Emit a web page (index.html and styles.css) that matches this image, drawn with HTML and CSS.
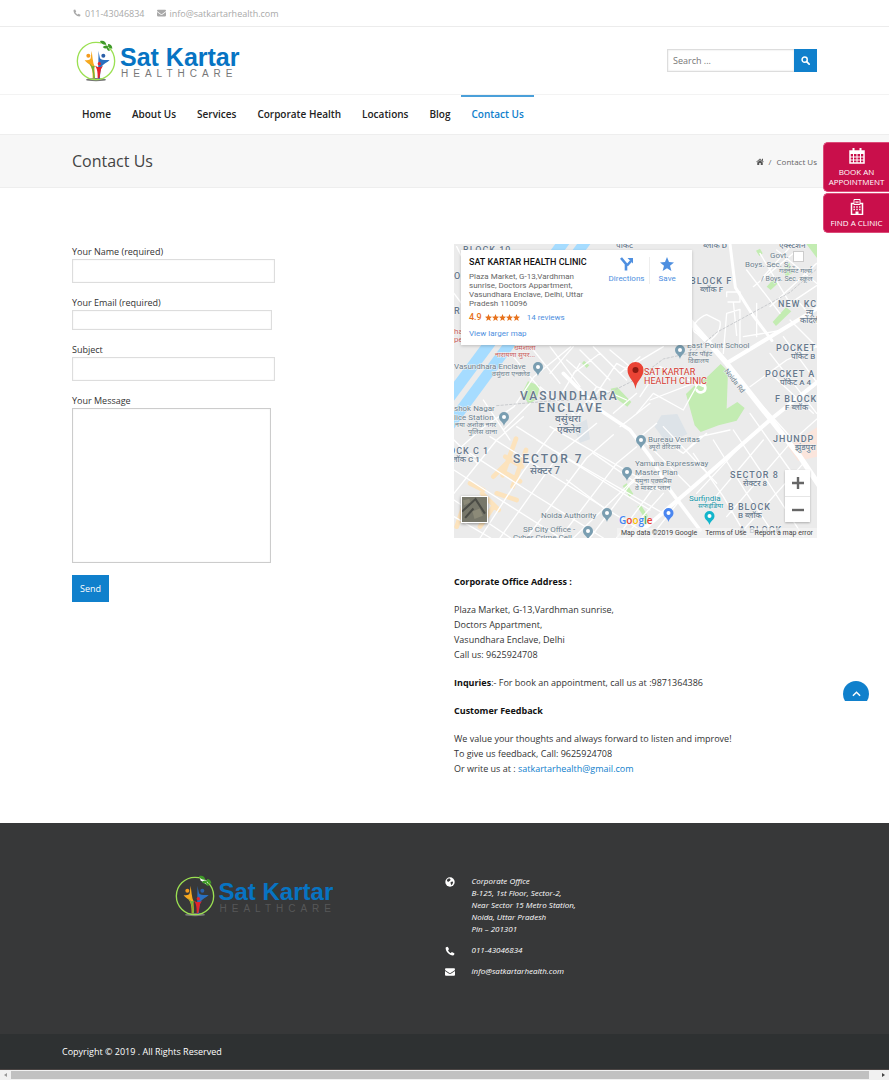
FILE: index.html
```html
<!DOCTYPE html>
<html lang="en">
<head>
<meta charset="utf-8">
<title>Contact Us - Sat Kartar Healthcare</title>
<meta name="viewport" content="width=device-width, initial-scale=1">
<link rel="stylesheet" href="styles.css">
</head>
<body>
<svg class="sprite" aria-hidden="true">
  <symbol id="i-phone" viewBox="0 0 16 16"><path d="M1 3.200C1 2 2.200 1.200 3.800 1c.5 0 .7.300 1 .9l1.400 2.500c.3.6 0 1-.5 1.400-.8.600-1 .8-.7 1.400 1 1.800 2 2.800 3.800 3.800.6.300.8.100 1.400-.7.400-.5.800-.8 1.400-.5l2.500 1.400c.6.300.9.5.9 1-.2 1.600-1 2.800-2.200 2.800C7 15 1 9 1 3.200z" fill="currentColor"/></symbol>
  <symbol id="i-mail" viewBox="0 0 16 14"><path d="M1.500 1h13c1 0 1.500.6 1.500 1.400 0 1-.8 1.900-1.600 2.500L9.500 8.300c-1 .7-2 .7-3 0L1.600 4.900C.8 4.300 0 3.400 0 2.400 0 1.600.5 1 1.500 1zM0 5.300l6 4.200c1.300.9 2.700.9 4 0l6-4.200v6.200c0 .9-.6 1.500-1.500 1.500h-13C.6 13 0 12.400 0 11.500z" fill="currentColor"/></symbol>
  <symbol id="i-emblem" viewBox="0 0 120 126">
    <ellipse class="shade" cx="60" cy="119" rx="30" ry="5"/>
    <circle cx="60" cy="63" r="56" fill="none" stroke="#9be052" stroke-width="4"/>
    <path d="M76 5l24 16-4 9-20-14z" class="gap"/>
    <path d="M72 3c10-3 17 1 19 11-9 1-16-2-19-11zM80 21c6-6 13-6 18 0-5 6-12 6-18 0zM96 12c8 0 13 5 13 14-8 0-14-5-13-14zM93 23c6 0 9 4 8 10-6-1-9-4-8-10z" fill="#3f9a28"/>
    <circle cx="37" cy="47" r="6" fill="#f39a1e"/>
    <path d="M26 60c8 2 15 1 18-5l3-23 3 25c2 8 1 12 5 20l2 38h-7c0-20-2-33-10-42-5-3-10-7-14-13z" fill="#f7a81f"/>
    <circle cx="82" cy="47" r="6" fill="#2a5fa8"/>
    <path d="M67 32l5 23c5 6 14 5 29 5-7 8-18 11-23 18-5 10-6 24-6 38h-5c0-20-1-32 0-46 0-14 1-26 0-38z" fill="#2a6fc0"/>
    <circle cx="70" cy="71" r="5" fill="#e3242b"/>
    <path d="M57 77l8 4h10l6-4-6 11c-2 10-3 17-5 27h-5c0-15 0-27-8-38z" fill="#e3242b"/>
    <path d="M40 70l9 9 8-2-4 9 4 29h-5c0-18-3-30-12-45z" fill="#69b33c"/>
  </symbol>
  <symbol id="i-poi" viewBox="0 0 10 14"><path d="M5 0a5 5 0 0 1 5 5c0 4-4 4.500-5 9-1-4.500-5-5-5-9a5 5 0 0 1 5-5z" fill="currentColor"/><circle cx="5" cy="5" r="2" fill="#fff"/></symbol>
  <symbol id="i-star" viewBox="0 0 7 7"><path d="M3.500 0l1 2.500 2.500.2-2 1.700.7 2.600-2.200-1.400L1.300 7 2 4.400 0 2.700l2.500-.2z" fill="currentColor"/></symbol>
</svg>

<header>
  <div class="topbar">
    <span><svg class="ic"><use href="#i-phone"/></svg>011-43046834</span>
    <span><svg class="ic wide"><use href="#i-mail"/></svg>info@satkartarhealth.com</span>
  </div>
  <div class="masthead">
    <a class="logo" href="#"><svg class="emblem"><use href="#i-emblem"/></svg><span class="words"><b>Sat Kartar</b><i>HEALTHCARE</i></span></a>
    <form class="search"><input type="search" aria-label="Search" placeholder="Search ..."><button type="button" aria-label="Search"><svg viewBox="0 0 16 16"><circle cx="6.500" cy="6.500" r="4.600" fill="none" stroke="#fff" stroke-width="2.600"/><path d="M10 10l4.500 4.500" stroke="#fff" stroke-width="3" stroke-linecap="round"/></svg></button></form>
  </div>
  <nav class="menu">
    <a href="#">Home</a><a href="#">About Us</a><a href="#">Services</a><a href="#">Corporate Health</a><a href="#">Locations</a><a href="#">Blog</a><a class="active" href="#">Contact Us</a>
  </nav>
</header>

<div class="titlebar">
  <h1>Contact Us</h1>
  <div class="crumbs"><a href="#" aria-label="Home"><svg viewBox="0 0 16 14"><path d="M8 1l7.500 6.500-1 1L8 3 1.500 8.500l-1-1zM12 1.500h2V6l-2-2zM8 4.200l5.500 4.600V14H9.500v-4h-3v4H2.500V8.800z" fill="#555"/></svg></a><span>/</span><span>Contact Us</span></div>
</div>

<main class="content">
  <form class="contact">
    <label for="name">Your Name (required)</label><input id="name" type="text">
    <label for="email">Your Email (required)</label><input id="email" class="email" type="email">
    <label for="subject">Subject</label><input id="subject" type="text">
    <label for="message">Your Message</label><textarea id="message"></textarea>
    <button type="button">Send</button>
  </form>

  <section class="info">
    <div class="map">
      <svg class="canvas" viewBox="0 0 363 294" preserveAspectRatio="xMidYMid slice">
        <rect width="363" height="294" fill="#ebebeb"/>
        <g transform="scale(.33333) translate(-12 -12)" fill="none" stroke-linecap="round" stroke-linejoin="round">
          <g stroke="#a6dcff">
            <path d="M0 470L200 200 360 -20" stroke-width="34"/>
            <path d="M0 555L140 365 250 215 410 0" stroke-width="32"/>
          </g>
          <g fill="#c3ecb2">
            <path d="M708 462l28-28 32-20 44-42 22 22-4 112 32-20 22 18-24 38-54 14-54 20-18-20z"/>
            <path d="M216 460l18-36 36 14-10 40-24 14zM482 446l20-4 42 44-12 14-40-30zM968 246l40-44 16 12-46 44zM1060 0h50v66zM950 140l18-20 16 10-22 20zM402 362l16 14-8 8-14-14zM518 738l12-8 20 32-12 8zM562 800l10-6 22 34-8 10zM918 32l12-6 8 14-10 8zM1000 90l18-22 10 30-20 12z"/>
          </g>
          <path d="M614 560l20-34 48-4 30 60-60 30zM370 560l40-22 10 60-30 10z" fill="#dde3e8"/>
          <path d="M1014 620l90-60v90l-60 12z" fill="#fbe5dc"/>
          <g stroke="#fce3bd" stroke-width="14">
            <path d="M198 596l-40 110M228 630l-40 110M150 690l60 34M166 650l50 30M96 760l50 50M140 760l60 20M60 730l40 20M130 800l-40 60M40 800l-20 60M180 660l-50 50"/>
          </g>
          <g stroke="#fff" stroke-width="4">
            <path d="M12 640l90-80 90-60 60-90 110-90M12 760L140 600l80-70M90 894l130-200 90-120 60-50M150 894L330 640l110-90M230 894l180-240 80-70M330 894L500 670l60-50M420 894l120-160 50-40M500 894l110-150"/>
            <path d="M12 690l140 90 180 114M60 640l170 110 230 144M120 590l160 100 330 204M200 560l110 70 330 190M12 830l110 64M12 780l170 114M300 560l330 190M260 600l340 210"/>
            <path d="M270 440l110 90 60-90 90 40M300 400l70-80M370 400l80-60 60 60 60-50M390 330l90 90M430 320l100 100M350 360l90 80M480 330l60 50 100-60M330 470l60-100M440 460l60-90 70 40M560 520l50-60 90 50 50-90"/>
            <path d="M20 20l30 60M12 160l30 40M190 350l100 120M250 330l80 100M300 320l90 120M12 600l70 70M100 480l80 120M240 490l-80 80"/>
            <path d="M570 470l60-90 130 60M600 480l130-50M490 520l70-60M510 560l90-70M560 600l60-50M640 600l60 40 70-60M700 640l50-50 90-20"/>
            <path d="M740 280c-30-14 10-50 30-56l40 20c6 30-20 50-40 66zM830 170v-14h40v30h-36M850 186l10 100M880 290l120-20M820 340l10-120 40-12M870 320V210M920 290V190"/>
            <path d="M740 760L870 620M780 790l160-190M830 830l190-220M880 870l180-200M730 640l90 130 70 120M790 600l100 160 80 120M850 570l100 150 110 170M900 520l120 170M930 490l100 110 90-80M960 540l130-100M900 440l110-80 90-40M960 340l140 180M1000 290l110 150M950 390l140 130"/>
            <path d="M930 40l90 150 90-60M890 90l100 130M980 30l120 100M910 140l120-100M960 200l140-130M1020 240l90 90M1050 190l60 70M1030 10l-90 100"/>
            <path d="M350 720l120 90M430 640l160 110M590 610l130 130M640 560l160 170M560 710l-190 184M640 760L520 894M690 780l-90 114"/>
          </g>
          <g stroke="#fff">
            <path d="M700 220L830 370 940 510 1050 650 1110 740" stroke-width="16"/>
            <path d="M830 370L1110 200M550 894L730 740 960 540 1110 420" stroke-width="12"/>
            <path d="M340 400l110 110 90 60 60 80 60 100 90 120" stroke-width="11"/>
            <path d="M840 12l16 130 50 80 60 80" stroke-width="9"/>
            <path d="M738 436c10-8 28-6 28 8s-20 18-26 6" stroke-width="8"/>
          </g>
          <path d="M140 497l160-14 140-6 120-60 80-60 90-20 70-60 220-120 80-70" stroke="#c9cbce" stroke-width="3" stroke-dasharray="7 6"/>
        </g>
        <g class="area">
          <text x="9" y="9">BLOCK 10</text><text x="236" y="40">BLOCK F</text><text class="s" x="246" y="48">ब्लॉक F</text>
          <text x="324" y="63">NEW KC</text><text class="s" x="352" y="71">न्यू</text><text class="s" x="346" y="79">कोंदली</text>
          <text x="322" y="107">POCKET</text><text class="s" x="337" y="115">पॉकेट B</text>
          <text x="311" y="133">POCKET A</text><text class="s" x="326" y="141">पॉकेट A 4</text>
          <text x="321" y="158">F BLOCK</text><text class="s" x="331" y="166">F ब्लॉक</text>
          <text x="319" y="198">JHUNDP</text><text class="s" x="341" y="206">झुंडपुरा</text>
          <text x="276" y="234">SECTOR 8</text><text class="s" x="289" y="242">सेक्टर 8</text>
          <text x="274" y="266">B BLOCK</text><text class="s" x="284" y="274">B ब्लॉक</text><text x="285" y="289">A BLOCK</text>
          <text x="-5" y="210">OCK C 1</text><text class="s" x="-2" y="218">लॉक C 1</text>
          <text x="0" y="35">O</text><text x="0" y="70">R</text>
          <text class="s" x="162" y="4">पॉकेट</text><text class="s" x="249" y="4">ब्लॉक D</text><text class="s" x="325" y="4">एक्स्टेंशन</text>
          <g class="big"><text x="66" y="156">VASUNDHARA</text><text x="84" y="168">ENCLAVE</text><text x="59" y="219">SECTOR 7</text></g>
          <g class="hi"><text x="101" y="178">वसुंधरा</text><text x="103" y="189">एंक्लेव</text><text x="76" y="230">सेक्टर 7</text></g>
        </g>
        <g class="place">
          <text x="316" y="14">Govt.</text><text x="291" y="23">Boys. Sec. S</text><text class="s" x="325" y="29">गवर्नमेंट गर्ल्स</text><text class="s" x="307" y="37">/ Boys. Sec. स्कूल</text>
          <text x="233" y="104">East Point School</text><text class="s" x="234" y="112">ईस्ट पॉइंट</text><text class="s" x="234" y="119">विद्यालय</text>
          <text x="0" y="125">Vasundhara Enclave</text><text class="s" x="38" y="132">वसुंधरा एन्क्लेव</text>
          <text x="0" y="167">shok Nagar</text><text x="0" y="176">lice Station</text><text class="s" x="1" y="183">नया अशोक नगर</text><text class="s" x="14" y="190">पुलिस थाना</text>
          <text x="194" y="198">Bureau Veritas</text><text class="s" x="195" y="205">ब्यूरो वेरिटास</text>
          <text x="181" y="222">Yamuna Expressway</text><text x="181" y="231">Master Plan</text><text class="s" x="181" y="239">यमुना एक्सप्रेस</text><text class="s" x="181" y="246">वे मास्टर प्लान</text>
          <text x="87" y="274">Noida Authority</text><text x="69" y="288">SP City Office -</text><text x="59" y="296">Cyber Crime Cell</text>
          <text class="road" transform="translate(270 127) rotate(52)">Noida Rd</text>
        </g>
        <g class="teal"><text x="235" y="257">Surfindia</text><text class="s" x="244" y="264">सर्फइंडिया</text></g>
        <g class="red"><text x="0" y="90">ha</text><text x="0" y="98">pe</text><text class="s" x="60" y="106">धर्मशाला</text><text class="s" x="41" y="113">नारायणा सुपर...</text><text class="pinname" x="190" y="131">SAT KARTAR</text><text class="pinname" x="190" y="140">HEALTH CLINIC</text></g>
        <g color="#7a9eb1">
          <use href="#i-poi" x="221" y="101" width="10" height="14"/><use href="#i-poi" x="79" y="118" width="10" height="14"/><use href="#i-poi" x="45" y="168" width="10" height="14"/><use href="#i-poi" x="182" y="191" width="10" height="14"/><use href="#i-poi" x="168" y="223" width="10" height="14"/><use href="#i-poi" x="148" y="264" width="10" height="14"/><use href="#i-poi" x="129" y="282" width="10" height="14"/>
        </g>
        <use href="#i-poi" x="209" y="264" width="11" height="14" color="#4a86f0"/><use href="#i-poi" x="250" y="267" width="11" height="14" color="#12b5cb"/>
        <path d="M181.500 145c-1-9-8-11-8-19a8 8 0 0 1 16 0c0 8-7 10-8 19z" fill="#ea4335"/><circle cx="181.500" cy="126" r="3" fill="#8c1a12"/>
        <text class="google" x="165" y="280"><tspan fill="#4285f4">G</tspan><tspan fill="#ea4335">o</tspan><tspan fill="#fbbc05">o</tspan><tspan fill="#4285f4">g</tspan><tspan fill="#34a853">l</tspan><tspan fill="#ea4335">e</tspan></text>
      </svg>
      <div class="card">
        <div class="where">
          <strong>SAT KARTAR HEALTH CLINIC</strong>
          <p>Plaza Market, G-13,Vardhman<br>sunrise, Doctors Appartment,<br>Vasundhara Enclave, Delhi, Uttar<br>Pradesh 110096</p>
          <div class="rating"><b>4.9</b><span class="stars" role="img" aria-label="Five stars"><svg><use href="#i-star"/></svg><svg><use href="#i-star"/></svg><svg><use href="#i-star"/></svg><svg><use href="#i-star"/></svg><svg><use href="#i-star"/></svg></span><a href="#">14 reviews</a></div>
          <a class="larger" href="#">View larger map</a>
        </div>
        <a class="act" href="#"><svg viewBox="0 0 14 14"><path d="M1 1l5 6v6.500M7 8.500l4-4.500" fill="none" stroke="#4e8fe0" stroke-width="2.600"/><path d="M7.500 1H13v5.500z" fill="#4e8fe0"/></svg>Directions</a>
        <a class="act save" href="#"><svg><use href="#i-star"/></svg>Save</a>
      </div>
      <span class="fullscreen"></span>
      <svg class="satellite" viewBox="0 0 24 24"><rect width="24" height="24" fill="#77776a"/><path d="M0 14L13 2l9 14M3 20l8-9" fill="none" stroke="#4b4c46" stroke-width="2"/><path d="M10 14l7-3 3 7-8 3zM1 3l6-1 1 3-6 3z" fill="#8c8a78"/></svg>
      <div class="zoom"><button type="button" aria-label="Zoom in"><svg viewBox="0 0 12 12"><path d="M6 0v12M0 6h12" stroke="#666" stroke-width="2.400"/></svg></button><button type="button" aria-label="Zoom out"><svg viewBox="0 0 12 12"><path d="M0 6h12" stroke="#666" stroke-width="2.400"/></svg></button></div>
      <div class="legal"><span>Map data ©2019 Google</span><span>Terms of Use</span><span>Report a map error</span></div>
    </div>
    <div class="details">
      <p><b>Corporate Office Address :</b></p>
      <p>Plaza Market, G-13,Vardhman sunrise,<br>Doctors Appartment,<br>Vasundhara Enclave, Delhi<br>Call us: 9625924708</p>
      <p><b>Inquries</b>:- For book an appointment, call us at :9871364386</p>
      <p><b>Customer Feedback</b></p>
      <p>We value your thoughts and always forward to listen and improve!<br>To give us feedback, Call: 9625924708<br>Or write us at : <a href="#">satkartarhealth@gmail.com</a></p>
    </div>
  </section>
</main>

<footer>
  <div class="foot">
    <a class="logo dark" href="#"><svg class="emblem"><use href="#i-emblem"/></svg><span class="words"><b>Sat Kartar</b><i>HEALTHCARE</i></span></a>
    <address>
      <svg class="fi" viewBox="0 0 16 16"><circle cx="8" cy="8" r="7.500" fill="#fff"/><path d="M4 3l3-1 2 2-1 2-2 1-1 1-2-2zM9 8l3-1 1 1-1 3-2 2-1-3z" fill="#373839"/></svg><span>Corporate Office<br>B-125, 1st Floor, Sector-2,<br>Near Sector 15 Metro Station,<br>Noida, Uttar Pradesh<br>Pin – 201301</span>
      <svg class="fi"><use href="#i-phone"/></svg><span>011-43046834</span>
      <svg class="fi"><use href="#i-mail"/></svg><span>info@satkartarhealth.com</span>
    </address>
  </div>
  <div class="copyright">Copyright © 2019 . All Rights Reserved</div>
</footer>
<div class="hscroll"><span class="arrow"></span><span class="thumb"></span><span class="arrow right"></span></div>

<aside class="side">
  <a href="#"><svg viewBox="0 0 16 16"><path d="M1 3h14v12H1z" fill="none" stroke="#fff" stroke-width="1.500"/><path d="M1 3h14v3H1zM3.500 0h2v4h-2zM10.500 0h2v4h-2z" fill="#fff"/><path d="M1 9h14M1 12h14M4.500 6v9M8 6v9M11.500 6v9" stroke="#fff"/></svg>BOOK AN<br>APPOINTMENT</a>
  <a href="#"><svg viewBox="0 0 16 16"><path d="M2.500 4.500h11v11h-11z" fill="none" stroke="#fff" stroke-width="1.500"/><path d="M5 .5h6v5H5z" fill="#c90f4b" stroke="#fff"/><path d="M7 2v2.500M9 2v2.500M7 3.200h2" stroke="#fff" stroke-width=".8"/><path d="M4.500 8h7M4.500 10.500h7" stroke="#fff" stroke-width="1.400" stroke-dasharray="1.400 1.400"/><path d="M6.500 12.500h3V16h-3z" fill="#fff"/></svg>FIND A CLINIC</a>
</aside>
<a class="totop" href="#" aria-label="Back to top"><svg viewBox="0 0 10 6"><path d="M1 5l4-4 4 4" fill="none" stroke="#fff" stroke-width="1.600"/></svg></a>
</body>
</html>
```

FILE: styles.css
```css
* { box-sizing: border-box; }
body { margin: 0; position: relative; background: #fff; color: #333; font: 9px/15px "Open Sans", "Noto Sans", sans-serif; }
a { color: #1080cc; text-decoration: none; }
p, h1 { margin: 0; }
input, button, textarea { font: inherit; }
.sprite { position: absolute; width: 0; height: 0; }

.topbar { display: flex; gap: 12px; height: 27px; padding: 0 73px; align-items: center; color: #a9a9a9; border-bottom: 1px solid #ececec; }
.topbar span { display: flex; align-items: center; gap: 4px; }
.ic { width: 8px; height: 8px; }
.ic.wide { width: 9px; }
.masthead { display: flex; justify-content: space-between; align-items: center; height: 68px; padding: 0 72px 0 76px; border-bottom: 1px solid #f3f3f3; }
.logo { display: flex; gap: 4px; align-items: center; }
.emblem { width: 40px; height: 42px; }
.shade { fill: #777; }
.gap { fill: #fff; }
.words { display: flex; flex-direction: column; padding-top: 2px; font-family: "Liberation Sans", Arial, sans-serif; }
.words b { font-size: 25px; line-height: 24px; color: #0774c3; }
.words i { font-style: normal; font-size: 10px; line-height: 10px; letter-spacing: 5px; color: #777; padding-left: 1px; }
.search { display: flex; width: 150px; height: 23px; }
.search input { flex: 1; min-width: 0; padding: 0 5px; border: 1px solid #ddd; border-right: 0; border-radius: 0; outline: 0; box-shadow: inset 0 0 2px #ddd; }
.search input::placeholder { color: #777; }
.search button { width: 23px; padding: 0; border: 0; background: #1080cc; display: grid; place-items: center; }
.search svg { width: 9px; height: 9px; }
.menu { display: flex; gap: 1px; height: 39px; padding: 0 72px; font-size: 10px; font-weight: 600; }
.menu a { padding: 0 10px; line-height: 35px; border-top: 2px solid transparent; color: #222; }
.menu .active { color: #1080cc; border-color: #4a9fd9; }

.titlebar { display: flex; justify-content: space-between; align-items: center; height: 54px; padding: 0 72px; background: #f7f7f7; border: solid #eee; border-width: 1px 0; }
.titlebar h1 { font-size: 16px; line-height: 24px; font-weight: 400; color: #444; }
.crumbs { display: flex; gap: 5px; align-items: center; font-size: 8px; color: #666; }
.crumbs a { display: flex; }
.crumbs svg { width: 8px; height: 7px; }

.content { display: grid; grid-template-columns: 1fr 1fr; gap: 19px; padding: 56px 72px 47px; }
.contact { display: flex; flex-direction: column; align-items: flex-start; }
.contact input, .contact textarea { width: 203px; height: 24px; margin: 0 0 12px; padding: 2px 5px; border: 1px solid #ddd; border-radius: 0; box-shadow: inset 0 0 2px #eee; resize: none; outline: 0; }
.contact .email { width: 200px; height: 20px; }
.contact textarea { width: 199px; height: 155px; border-color: #ccc; }
.contact button { height: 27px; padding: 0 8px; border: 0; background: #1080cc; color: #fff; }

.map { position: relative; height: 294px; overflow: hidden; font-family: Roboto, sans-serif; }
.canvas { display: block; width: 100%; height: 100%; }
.canvas text { font-family: Roboto, "Noto Sans", sans-serif; paint-order: stroke; stroke: #f4f4f4; stroke-width: 1px; }
.area text { font-size: 9px; font-weight: 500; letter-spacing: 1px; fill: #66788c; }
.area .s { font-size: 8px; letter-spacing: 0; }
.place .s, .teal .s, .red .s { font-size: 7px; }
.area .big text { font-size: 12px; letter-spacing: 2px; }
.area .hi text { font-size: 10px; letter-spacing: 0; }
.place text, .teal text, .red text { font-size: 8px; fill: #6c7f8d; }
.place .road { font-size: 7px; }
.teal text { fill: #1295a8; }
.red text { fill: #c9605c; }
.red .pinname { font-size: 9px; fill: #d3382f; }
.canvas .google { font-family: "Open Sans", sans-serif; font-size: 10px; font-weight: 600; }
.card { position: absolute; left: 7px; top: 6px; width: 231px; height: 95px; padding: 7px 8px; display: flex; background: #fff; box-shadow: 0 1px 3px #0003; }
.where { width: 136px; white-space: nowrap; }
.where strong { display: block; font-size: 9px; line-height: 10px; font-weight: 500; color: #111; }
.where p { margin-top: 5px; font-size: 8px; line-height: 9px; color: #666; }
.card a { color: #4e8fe0; font-size: 8px; }
.rating { display: flex; align-items: center; height: 10px; margin-top: 4px; }
.rating b { color: #e7711b; font-size: 9px; font-weight: 500; }
.stars { display: flex; margin: 0 7px 0 3px; color: #e7711b; }
.stars svg { width: 7px; height: 7px; }
.larger { display: block; line-height: 10px; margin-top: 7px; }
.act { display: flex; flex-direction: column; align-items: center; gap: 2px; height: 27px; width: 46px; line-height: 11px; }
.act svg { width: 14px; height: 14px; flex: none; }
.save { width: 35px; border-left: 1px solid #eee; }
.fullscreen { position: absolute; right: 13px; top: 7px; width: 11px; height: 11px; background: #fff; border: 1px solid #ccc; }
.satellite { position: absolute; left: 7px; bottom: 15px; width: 27px; height: 27px; border: 1px solid #fff; box-shadow: 0 1px 3px #0006; }
.zoom { position: absolute; right: 7px; bottom: 16px; width: 25px; background: #fff; box-shadow: 0 1px 2px #0004; }
.zoom button { display: grid; place-items: center; width: 100%; height: 26px; padding: 0; border: 0; background: none; }
.zoom button + button { border-top: 1px solid #e6e6e6; }
.zoom svg { width: 12px; height: 12px; }
.legal { position: absolute; right: 0; bottom: 0; display: flex; gap: 8px; padding: 0 4px; font-size: 7px; line-height: 10px; color: #444; background: #f5f5f5b0; }

.details { padding-top: 36px; }
.details p { margin-bottom: 13px; }
.details p:last-child { margin: 0; }
.details b { color: #111; }

.foot { display: grid; grid-template-columns: 1fr 1fr; align-items: start; height: 211px; padding-top: 52px; background: #373839; }
.dark { justify-self: center; padding-left: 66px; }
.dark .words b { font-size: 24px; }
.dark .words i { color: #565758; }
.dark .shade { fill: #eee; }
.dark .gap { fill: #373839; }
address { display: grid; grid-template-columns: 12px 1fr; column-gap: 15px; row-gap: 9px; color: #fff; font-size: 8px; line-height: 12px; }
.fi { width: 10px; height: 10px; margin-top: 2px; }
.copyright { height: 36px; padding-left: 62px; line-height: 35px; color: #fff; background: #2e3132; border-bottom: 1px solid #4a4443; }
.hscroll { display: flex; align-items: center; height: 10px; background: #f1f1f1; }
.arrow { width: 3px; margin: 0 4px; border: solid transparent; border-width: 2px 3px 2px 0; border-right-color: #999; }
.thumb { flex: 1; height: 8px; background: #c1c1c1; margin-right: 9px; }
.arrow.right { border-width: 2px 0 2px 3px; border-left-color: #444; }

.side { position: absolute; right: 0; top: 142px; width: 66px; display: grid; gap: 1px; }
.side a { display: block; padding: 5px 0 4px; text-align: center; font-size: 8px; line-height: 10px; color: #fff; background: #c90f4b; border: 1px solid #dc4b78; border-right: 0; border-radius: 5px 0 0 5px; }
.side svg { display: block; width: 16px; height: 16px; margin: 0 auto 3px; }
.totop { position: absolute; right: 20px; top: 681px; width: 26px; height: 26px; display: grid; place-items: center; background: #1080cc; border-radius: 50%; clip-path: inset(0 0 6px 0); }
.totop svg { width: 9px; height: 6px; }
```
